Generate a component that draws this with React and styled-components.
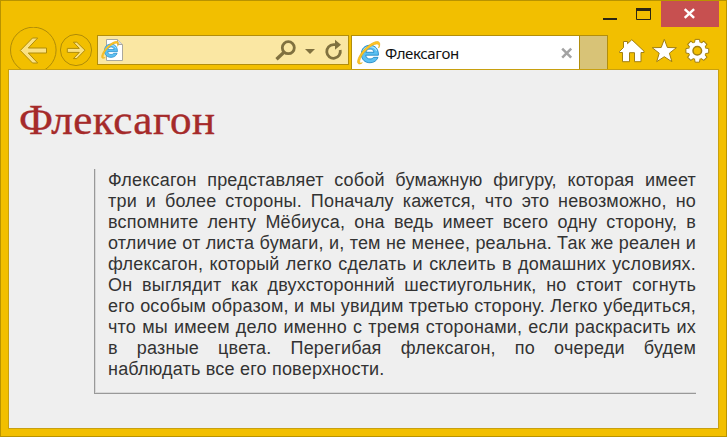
import React from "react";
import styled, { createGlobalStyle } from "styled-components";

const Global = createGlobalStyle`
  * { box-sizing: border-box; }
  body { margin: 0; }
`;

const Window = styled.div`
  width: 727px;
  height: 437px;
  background: #f2bf00;
  border: 1px solid #b99300;
  display: flex;
  flex-direction: column;
  overflow: hidden;
`;

const TitleBar = styled.header`
  height: 26px;
  flex: none;
  display: flex;
  justify-content: flex-end;
  padding-right: 7px;
`;

const CaptionButton = styled.button`
  border: 0;
  padding: 0;
  width: ${(p) => p.$width}px;
  height: 26px;
  background: ${(p) => (p.$danger ? "#c75050" : "transparent")};
  display: flex;
`;

const Toolbar = styled.nav`
  height: 42px;
  flex: none;
  display: flex;
  align-items: flex-start;
  padding-left: 8px;
`;

const History = styled.div`
  width: 88px;
  height: 42px;
  overflow: hidden;
`;

const Address = styled.div`
  width: 252px;
  height: 30px;
  margin-top: 8px;
  border: 1px solid #b28e0c;
  background: #fae7a3;
  display: flex;
  justify-content: space-between;
`;

const Tab = styled.div`
  width: 228px;
  height: 34px;
  margin: 8px 0 0 2px;
  border: 1px solid #b28e0c;
  border-width: 1px 0 0 1px;
  background: #fff;
  display: flex;
`;

const TabLabel = styled.span`
  flex: 1;
  padding-left: 2px;
  font: 15px/34px "Noto Sans", "Open Sans", sans-serif;
  letter-spacing: -0.36px;
  color: #111;
`;

const NewTab = styled.div`
  width: 29px;
  height: 34px;
  margin-top: 8px;
  background: #d8c377;
  border: 1px solid #b28e0c;
  border-bottom: 0;
`;

const Tools = styled.div`
  height: 42px;
  margin-left: 10px;
`;

const Icon = styled.svg`
  display: block;
  flex: none;
`;

const Page = styled.main`
  width: 711px;
  height: 360px;
  margin-left: 7px;
  flex: none;
  border: 1px solid #c8a010;
  background: #efefef;
  padding: 26px 22px 0 10px;
`;

const Heading = styled.h1`
  margin: 0;
  height: 73px;
  font: 400 43px/47px Georgia, "Liberation Serif", serif;
  letter-spacing: 0.5px;
  color: #a52a2a;
  -webkit-text-stroke: 0.4px #a52a2a;
`;

const Article = styled.p`
  margin: 0 0 0 75px;
  width: 602px;
  height: 225px;
  padding: 1px 0 0 13px;
  border-left: 1px solid #999;
  border-bottom: 1px solid #999;
  box-shadow: inset 1px -1px 0 #d9d9d9;
  font: 18px/21px "Liberation Sans", Arial, sans-serif;
  letter-spacing: 0.2px;
  color: #333;
`;

const Line = styled.span`
  display: block;
  white-space: nowrap;
  text-align: justify;
  text-align-last: justify;

  &:last-child {
    text-align-last: left;
  }
`;

const Explorer = () => (
  <g>
    <path fillRule="evenodd" d="M20.3 13.6H8.6c.2 2.3 1.7 3.5 3.9 3.5 1.6 0 2.6-.5 3.3-1.5h4.1c-1.1 3.1-3.8 5-7.4 5-4.8 0-8-3.1-8-8.1s3.2-8.1 8-8.1 8 3.5 7.8 9.2zM8.7 10.9h7.5c-.3-2-1.7-3-3.6-3-2.1 0-3.5 1-3.9 3z" fill="#5cc0f2" stroke="#1c86c6" strokeWidth=".8" />
    <path d="M6 10C7.1 7.1 9.4 5.8 12.5 5.8c2.8 0 5 1.2 6.1 3.6" fill="none" stroke="#b5e8ff" strokeWidth="1" />
    <path d="M5.4 20.6C2.5 22.3 1.8 19.5 5 14 8.9 7.6 16.5 2.2 20 3.4c1 .4 1.1 1.8.5 3.6 1.5-3 1.3-5.2-.2-5.8C16.7-.3 7.4 6.3 3.1 13.7-.6 20.1.9 23.7 5.4 20.6z" fill="#ffc529" stroke="#e8a90a" strokeWidth=".6" />
  </g>
);

const LINES = [
  "Флексагон представляет собой бумажную фигуру, которая имеет",
  "три и более стороны. Поначалу кажется, что это невозможно, но",
  "вспомните ленту Мёбиуса, она ведь имеет всего одну сторону, в",
  "отличие от листа бумаги, и, тем не менее, реальна. Так же реален и",
  "флексагон, который легко сделать и склеить в домашних условиях.",
  "Он выглядит как двухсторонний шестиугольник, но стоит согнуть",
  "его особым образом, и мы увидим третью сторону. Легко убедиться,",
  "что мы имеем дело именно с тремя сторонами, если раскрасить их",
  "в разные цвета. Перегибая флексагон, по очереди будем",
  "наблюдать все его поверхности.",
];

const TEETH = [0, 45, 90, 135, 180, 225, 270, 315];

export default function App() {
  return (
    <>
      <Global />
      <Window>
        <TitleBar>
          <CaptionButton $width={33} aria-label="Свернуть">
            <Icon width="33" height="26"><path d="M7 17h14v2H7z" fill="#2b2614" /></Icon>
          </CaptionButton>
          <CaptionButton $width={32} aria-label="Развернуть">
            <Icon width="32" height="26">
              <path d="M7.5 8.5h14v10h-14z" fill="none" stroke="#2b2614" />
              <path d="M7 7h15v3H7z" fill="#2b2614" />
            </Icon>
          </CaptionButton>
          <CaptionButton $width={58} $danger aria-label="Закрыть">
            <Icon width="58" height="26"><path d="M23.7 8.2l9.4 8.6M33.1 8.2l-9.4 8.6" stroke="#fff" strokeWidth="2.5" /></Icon>
          </CaptionButton>
        </TitleBar>
        <Toolbar>
          <History>
            <Icon width="88" height="42" fill="#fae183" stroke="#b08c08">
              <circle cx="24.3" cy="23" r="22.8" fill="none" />
              <path d="M11.3 23.5L23.5 11h5.2l-9.4 10h18.2v5H19.3l9.4 10h-5.2z" />
              <circle cx="67" cy="23" r="15.6" fill="none" />
              <path d="M76 23.2l-8.2-8h-3.4l5.9 6.2h-12v4h12l-5.9 6.2h3.4z" />
            </Icon>
          </History>
          <Address>
            <Icon width="30" height="28">
              <path d="M8.5 3.5h11l5 5v16h-16z" fill="#fff" stroke="#aaa89e" />
              <path d="M19.5 3.5v5h5" fill="#ddd" stroke="#aaa89e" />
              <g transform="translate(2.8 4.5) scale(.82)"><Explorer /></g>
            </Icon>
            <Icon width="74" height="28" fill="none" stroke="#80713f">
              <circle cx="14.3" cy="11.7" r="6" strokeWidth="2.8" />
              <path d="M10 16.3l-7.5 7" strokeWidth="3.3" />
              <path d="M31 13h10l-5 5z" fill="#80713f" stroke="none" />
              <path d="M62.5 8.7h-3A6.8 6.8 0 1 0 66.2 14" strokeWidth="2.8" />
              <path d="M61 3.8l6 5-6 5z" fill="#80713f" stroke="none" />
            </Icon>
          </Address>
          <Tab>
            <Icon width="31" height="33"><g transform="translate(4.5 4.5) scale(1.08)"><Explorer /></g></Icon>
            <TabLabel>Флексагон</TabLabel>
            <Icon width="22" height="33"><path d="M5.2 12.7l9 9M14.2 12.7l-9 9" stroke="#a3a3a3" strokeWidth="2.5" /></Icon>
          </Tab>
          <NewTab />
          <Tools>
            <Icon width="100" height="42" fill="#fff" stroke="#a17f10">
              <path d="M1.5 24.5L5.5 20.5v-6h4v2.2l4.3-4L26 24.2v1.3h-3v9.2h-6.5v-9h-5v9h-7v-9.2h-3z" />
              <path d="M46.3 12.3l3.1 8.2 9 .2-7 5.5 2.5 8.5-7.6-5-7.6 5 2.5-8.5-7-5.5 9-.2z" />
              <g transform="translate(79.3 23.8)">
                {TEETH.map((a) => (
                  <path key={a} transform={`rotate(${a})`} d="M-3-7l.8-4.4h4.4L3-7z" />
                ))}
                <circle r="8.5" stroke="none" />
                <circle r="4.3" fill="#f2bf00" strokeWidth="1.5" />
              </g>
            </Icon>
          </Tools>
        </Toolbar>
        <Page>
          <Heading>Флексагон</Heading>
          <Article>
            {LINES.map((line) => (
              <Line key={line}>{line} </Line>
            ))}
          </Article>
        </Page>
      </Window>
    </>
  );
}
